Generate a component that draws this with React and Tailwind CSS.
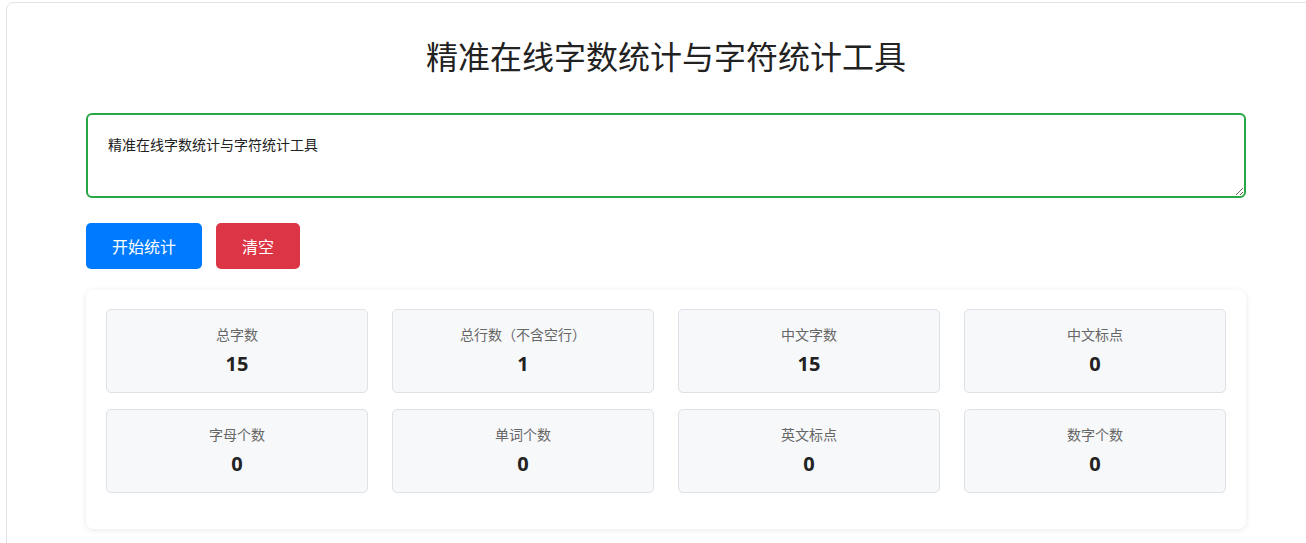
import React from "react";

const stats = [
  ["总字数", "15"],
  ["总行数（不含空行）", "1"],
  ["中文字数", "15"],
  ["中文标点", "0"],
  ["字母个数", "0"],
  ["单词个数", "0"],
  ["英文标点", "0"],
  ["数字个数", "0"],
];

export default function App() {
  return (
    <div
      className="w-[1306px] h-[543px] overflow-hidden bg-white"
      style={{ fontFamily: '"Segoe UI", "Open Sans", "Noto Sans CJK SC", sans-serif' }}
    >
      <div className="ml-[6px] mt-[2px] w-[1320px] h-[600px] border border-[#e1e1ea] rounded-[8px] bg-white pt-[33px] px-[79px]">
        <h1 className="text-center text-[32px] leading-[38px] text-[#222] font-normal mb-[39px] [font-family:'Noto_Sans_CJK_SC',sans-serif]">
          精准在线字数统计与字符统计工具
        </h1>
        <textarea
          defaultValue="精准在线字数统计与字符统计工具"
          className="block w-[1160px] h-[85px] border-2 border-[#28a745] rounded-[6px] px-[20px] pt-[19px] pb-[20px] text-[14px] leading-[20px] text-[#222] outline-none [font-family:'Noto_Sans_CJK_SC',sans-serif]"
        />
        <div className="flex gap-[14px] mt-[25px] [font-family:'Noto_Sans_CJK_SC',sans-serif]">
          <button className="h-[46px] px-[26px] bg-[#007bff] text-white text-[16px] rounded-[5px]">
            开始统计
          </button>
          <button className="h-[46px] px-[26px] bg-[#dc3545] text-white text-[16px] rounded-[5px]">
            清空
          </button>
        </div>
        <div className="mt-[21px] w-[1160px] bg-white rounded-[8px] shadow-[0_1px_6px_rgba(0,0,0,0.09)] px-[20px] pt-[19px] pb-[36px]">
          <div className="grid grid-cols-4 gap-x-[24px] gap-y-[16px]">
            {stats.map(([label, value]) => (
              <div
                key={label}
                className="h-[84px] bg-[#f7f8fa] border border-[#dee2e6] rounded-[5px] flex flex-col items-center pt-[14px]"
              >
                <div className="text-[14px] leading-[20px] text-[#666] [font-family:'Noto_Sans_CJK_SC',sans-serif]">
                  {label}
                </div>
                <div className="mt-[5px] text-[20px] leading-[30px] font-bold text-[#222]">
                  {value}
                </div>
              </div>
            ))}
          </div>
        </div>
      </div>
    </div>
  );
}
